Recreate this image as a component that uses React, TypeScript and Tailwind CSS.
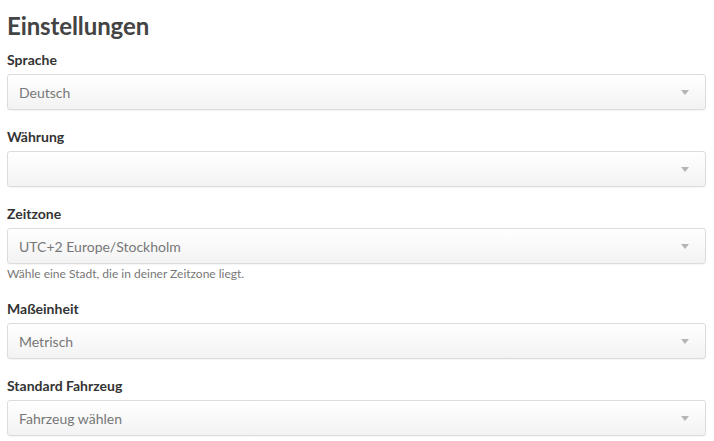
import React from 'react';

type Field = { label: string; value: string; hint?: string };

const fields: Field[] = [
  { label: 'Sprache', value: 'Deutsch' },
  { label: 'Währung', value: '' },
  { label: 'Zeitzone', value: 'UTC+2 Europe/Stockholm', hint: 'Wähle eine Stadt, die in deiner Zeitzone liegt.' },
  { label: 'Maßeinheit', value: 'Metrisch' },
  { label: 'Standard Fahrzeug', value: 'Fahrzeug wählen' },
];

function SelectBox({ value }: { value: string }) {
  return (
    <div className="flex h-9 items-center justify-between rounded-[3px] border border-[#dcdcdc] bg-gradient-to-b from-white to-[#f3f3f3] pl-[11px] pr-4 shadow-[0_1px_1px_rgba(0,0,0,0.04)]">
      <span className="text-[14px] text-[#777]">{value}</span>
      <span className="h-0 w-0 border-x-[4px] border-t-[5px] border-x-transparent border-t-[#b5b5b5]" />
    </div>
  );
}

export default function App() {
  return (
    <main className="bg-white pl-[7px] pr-2 pt-[11px] font-['Lato',sans-serif] text-[#333]">
      <h1 className="text-[24px] font-bold leading-[30px] tracking-[-0.1px] text-[#444]">Einstellungen</h1>
      <div className="mt-[10px] flex flex-col">
        {fields.map((f) => (
          <div key={f.label} className="mb-[18px]">
            <label className="mb-[5px] block text-[14px] font-bold leading-[18px] text-[#333]">{f.label}</label>
            <SelectBox value={f.value} />
            {f.hint && <p className="mt-[2px] text-[12px] leading-[16px] text-[#777]">{f.hint}</p>}
          </div>
        ))}
      </div>
    </main>
  );
}
